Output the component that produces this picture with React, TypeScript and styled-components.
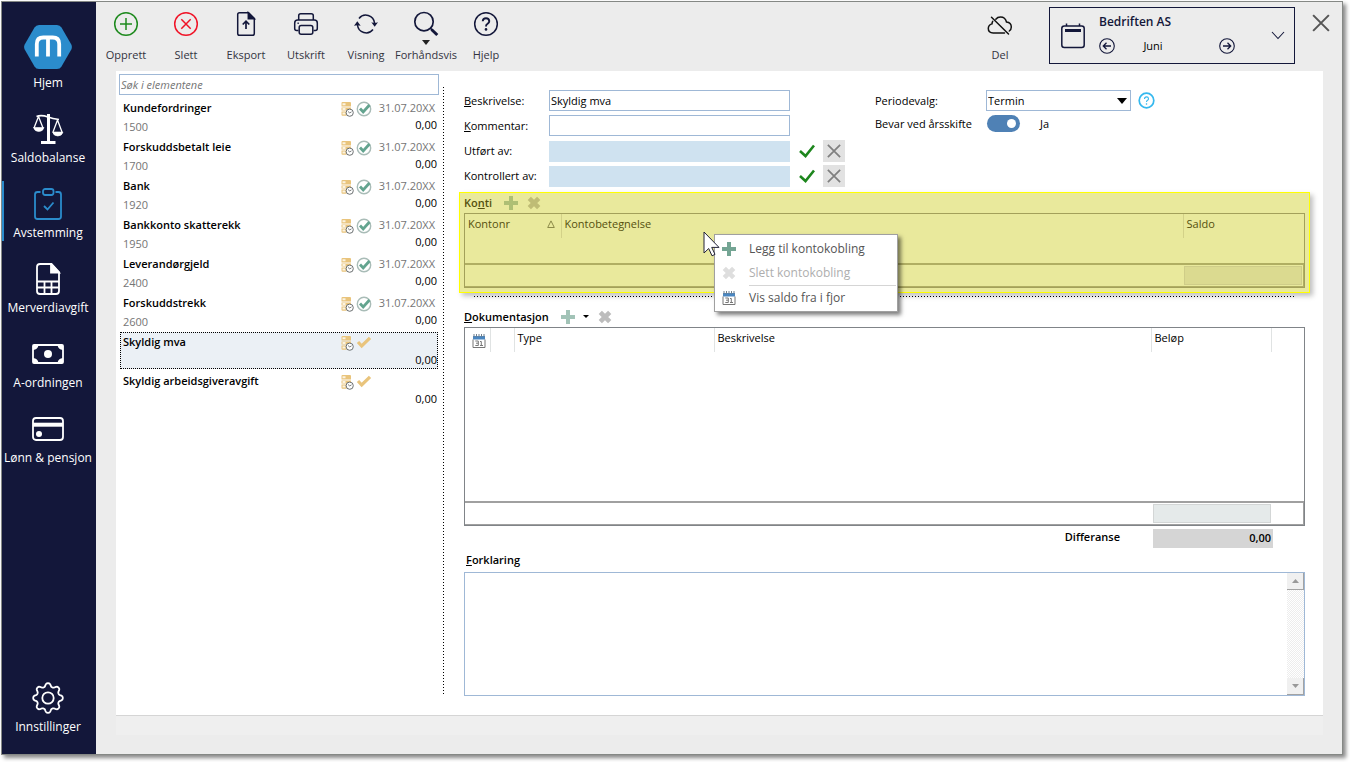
import React from "react";
import styled, { createGlobalStyle } from "styled-components";

const navy = "#13173a";
const blue = "#2b8ccc";
const inputLine = "#9fb8d6";

const GlobalStyle = createGlobalStyle`
  *, *::before, *::after { box-sizing: border-box; }
  body {
    margin: 0;
    background: #fff;
    color: #000;
    font-family: "Open Sans", "Noto Sans", sans-serif;
    font-size: 11px;
    line-height: 16px;
  }
  button, input, select, textarea { font: inherit; color: inherit; margin: 0; }
  button { padding: 0; border: 0; background: none; cursor: pointer; }
  h2 { margin: 0; font-size: 11px; font-weight: 600; line-height: 16px; }
  svg { display: block; flex: none; }
`;

const Page = styled.div`
  display: flex;
  min-height: 100vh;
  padding: 1px 7px 7px 1px;
`;

const Window = styled.div`
  flex: 1;
  display: flex;
  min-width: 0;
  border: 1px solid #858885;
  background: #ececec;
  box-shadow: 3px 3px 4px #8a8a8a;
`;

/* ---------- side navigation ---------- */

const Sidebar = styled.nav`
  flex: none;
  display: flex;
  flex-direction: column;
  gap: 15px;
  width: 94px;
  padding: 23px 0 19px;
  background: ${navy};
`;

const NavItem = styled.a<{ $active?: boolean; $home?: boolean; $last?: boolean }>`
  display: flex;
  flex-direction: column;
  align-items: center;
  justify-content: space-between;
  height: ${(p) => (p.$home ? 66 : 60)}px;
  padding: ${(p) => (p.$home ? 0 : 7)}px 4px 0 0;
  margin-top: ${(p) => (p.$last ? "auto" : "0")};
  border-left: 2px solid ${(p) => (p.$active ? blue : "transparent")};
  color: #fff;
  font-size: 12px;
  text-decoration: none;
  white-space: nowrap;
`;

/* ---------- toolbar ---------- */

const Main = styled.div`
  flex: 1;
  min-width: 0;
  display: flex;
  flex-direction: column;
`;

const Toolbar = styled.header`
  display: flex;
  height: 69px;
  flex: none;
  padding-right: 12px;
`;

const Tool = styled.button`
  display: flex;
  flex-direction: column;
  align-items: center;
  width: 60px;
  padding-top: 8px;
  color: #33333f;
  white-space: nowrap;
`;

const ToolIcon = styled.span`
  display: grid;
  place-items: center;
  height: 28px;
`;

const CaretRow = styled.span`
  display: grid;
  place-items: center;
  height: 9px;
`;

const Spacer = styled.div`
  flex: 1;
`;

const CompanyBox = styled.div`
  display: flex;
  align-items: center;
  width: 246px;
  height: 57px;
  margin: 5px 17px 0 19px;
  padding: 0 9px 0 11px;
  border: 1px solid ${navy};
  color: ${navy};
`;

const CompanyInfo = styled.div`
  width: 136px;
  margin: 0 auto 0 14px;
  padding-bottom: 4px;
`;

const CompanyName = styled.div`
  font-size: 12px;
  font-weight: 600;
`;

const PeriodRow = styled.div`
  display: flex;
  align-items: center;
  justify-content: space-between;
  margin-top: 8px;
  color: #000;
`;

const PeriodName = styled.span`
  width: 76px;
  margin-right: auto;
  text-align: center;
`;

const CloseButton = styled.button`
  align-self: flex-start;
  margin-top: 12px;
`;

/* ---------- content ---------- */

const Panel = styled.main`
  flex: 1;
  display: flex;
  margin: 0 19px 0 20px;
  padding: 3px 18px 19px 3px;
  background: #fff;
  border-bottom: 1px solid #d5d5d5;
`;

const StatusBar = styled.footer`
  flex: none;
  height: 19px;
  margin: 0 19px 19px 20px;
  background: #efefef;
`;

const ListColumn = styled.section`
  flex: none;
  width: 320px;
`;

const Search = styled.input`
  display: block;
  width: 100%;
  height: 21px;
  padding: 0 1px;
  border: 1px solid ${inputLine};
  outline: 0;
  &::placeholder { color: #757575; opacity: 1; font-style: italic; }
`;

const List = styled.ul`
  list-style: none;
  display: flex;
  flex-direction: column;
  gap: 2px;
  margin: 3px 0 0;
  padding: 0 1px;
`;

const ListRow = styled.li<{ $selected?: boolean }>`
  display: grid;
  grid-template-columns: 1fr 13px 17px 62px;
  column-gap: 2px;
  height: 37px;
  padding: 1px 0 0 2px;
  border: 1px dotted ${(p) => (p.$selected ? "#000" : "transparent")};
  background: ${(p) => (p.$selected ? "#ebf0f5" : "none")};
`;

const RowName = styled.strong`
  font-weight: 600;
  white-space: nowrap;
`;

const RowDate = styled.span`
  color: #757575;
  text-align: right;
  padding-right: 2px;
`;

const RowCode = styled.span`
  grid-column: 1;
  color: #757575;
  padding-top: 2px;
`;

const RowAmount = styled.span`
  grid-column: 2 / -1;
  text-align: right;
`;

const Divider = styled.div`
  flex: none;
  width: 1px;
  margin: 13px 20px 0 4px;
  background: repeating-linear-gradient(#000 0 1px, transparent 1px 3px);
`;

const Detail = styled.section`
  flex: 1;
  min-width: 0;
  display: flex;
  flex-direction: column;
  padding-top: 16px;
`;

const Forms = styled.form`
  display: flex;
  gap: 30px;
`;

const FormBlock = styled.div<{ $gap: number }>`
  display: flex;
  flex-direction: column;
  gap: ${(p) => p.$gap}px;
`;

const Field = styled.div<{ $label: number }>`
  display: grid;
  grid-template-columns: ${(p) => p.$label}px auto auto auto;
  align-items: center;
  justify-content: start;
  height: 21px;
`;

const TextBox = styled.input`
  width: 241px;
  height: 21px;
  padding: 0 1px;
  border: 1px solid ${inputLine};
  background: #fff;
  outline: 0;
  &:read-only { border-color: #cfe2f0; background: #cfe2f0; }
`;

const ApproveButton = styled.button`
  margin: 0 8px 0 9px;
`;

const ClearButton = styled.button`
  display: grid;
  place-items: center;
  width: 22px;
  height: 22px;
  background: #e2e2e2;
`;

const SelectWrap = styled.div`
  display: flex;
  align-items: center;
  gap: 7px;
`;

const Select = styled.select`
  width: 145px;
  height: 21px;
  padding: 0 1px;
  border: 1px solid ${inputLine};
  border-radius: 0;
  appearance: none;
  background: #fff;
`;

const SelectArrow = styled.svg`
  margin: 0 4px 0 -21px;
  pointer-events: none;
`;

const Toggle = styled.input`
  appearance: none;
  display: flex;
  align-items: center;
  justify-content: flex-end;
  width: 33px;
  height: 17px;
  margin-left: 1px;
  padding-right: 4px;
  border-radius: 9px;
  background: #4f81b5;
  &::after {
    content: "";
    width: 9px;
    height: 9px;
    border-radius: 50%;
    background: #fff;
  }
`;

const ToggleText = styled.span`
  margin-left: 20px;
`;

const Highlight = styled.section`
  position: relative;
  margin: 6px -5px 0;
  padding: 1px 4px 4px;
  border: 1px solid #ffff00;
  background: #e9e99c;
  color: #55500f;
  box-shadow: 3px 3px 5px rgba(0, 0, 0, 0.25);
`;

const SectionHead = styled.div`
  display: flex;
  align-items: center;
  height: 19px;
  padding-bottom: 2px;
`;

const HeadIcon = styled.button<{ $gap: number }>`
  display: block;
  margin-left: ${(p) => p.$gap}px;
`;

const Frame = styled.div<{ $tinted?: boolean }>`
  flex: 1;
  display: flex;
  flex-direction: column;
  min-height: ${(p) => (p.$tinted ? 75 : 120)}px;
  border: 1px solid ${(p) => (p.$tinted ? "#a3a05a" : "#808488")};
`;

const Table = styled.table`
  width: 100%;
  table-layout: fixed;
  border-collapse: collapse;
`;

const Th = styled.th<{ $w?: number; $line?: string }>`
  width: ${(p) => (p.$w ? p.$w + "px" : "auto")};
  height: 24px;
  padding: 0 3px 4px;
  border-left: ${(p) => (p.$line ? "1px solid " + p.$line : "0")};
  font-weight: 400;
  text-align: left;
`;

const DateTh = styled(Th)`
  padding: 2px 0 0 7px;
`;

const SortHead = styled.span`
  display: flex;
  align-items: center;
  justify-content: space-between;
  padding-right: 3px;
`;

const TotalRow = styled.div<{ $tinted?: boolean }>`
  display: flex;
  justify-content: flex-end;
  height: 24px;
  margin-top: auto;
  padding: 1px ${(p) => (p.$tinted ? 1 : 32)}px 1px 0;
  border: solid ${(p) => (p.$tinted ? "#b0ae62" : "#a0a0a0")};
  border-width: 2px 1px 1px 0;
`;

const TotalCell = styled.output<{ $tinted?: boolean }>`
  width: 118px;
  border: 1px solid ${(p) => (p.$tinted ? "#cfcd88" : "#d3d6d6")};
  background: ${(p) => (p.$tinted ? "#dbda90" : "#e5eaea")};
`;

const Splitter = styled.div`
  height: 1px;
  margin: 3px 10px 11px;
  background: repeating-linear-gradient(90deg, #000 0 1px, transparent 1px 3px);
`;

const Difference = styled.div`
  display: flex;
  justify-content: flex-end;
  gap: 33px;
  margin: 3px 32px 4px 0;
  font-weight: 600;
`;

const DifferenceValue = styled.output`
  width: 120px;
  height: 19px;
  padding: 1px 2px;
  background: #d5d5d5;
  text-align: right;
`;

const NoteHead = styled.h2`
  padding-left: 2px;
`;

const NoteBox = styled.div`
  flex: none;
  display: flex;
  height: 124px;
  margin-top: 4px;
  border: 1px solid ${inputLine};
`;

const Note = styled.textarea`
  flex: 1;
  border: 0;
  outline: 0;
  resize: none;
  overflow: hidden;
`;

const Scrollbar = styled.div`
  display: flex;
  flex-direction: column;
  justify-content: space-between;
  width: 17px;
  background: repeating-conic-gradient(#ededed 0 25%, #fff 0 50%) 0 0 / 2px 2px;
`;

const ScrollButton = styled.button`
  display: grid;
  place-items: center;
  height: 17px;
  border: solid #a3a3a3;
  border-width: 0 1px 1px 0;
  background: #f0f0f0;
`;

/* ---------- context menu ---------- */

const Menu = styled.div`
  position: absolute;
  top: 41px;
  left: 254px;
  z-index: 1;
  width: 184px;
  padding: 2px 1px 1px;
  border: 1px solid #a0a0a0;
  background: #fff;
  box-shadow: 3px 3px 4px rgba(0, 0, 0, 0.5);
`;

const MenuItem = styled.button`
  display: flex;
  align-items: center;
  gap: 13px;
  width: 100%;
  height: 24px;
  padding-left: 6px;
  color: #555;
  font-size: 12px;
  white-space: nowrap;
  &:disabled { color: #aeaeae; }
`;

const MenuLine = styled.div`
  height: 1px;
  margin: 0 0 0 33px;
  background: #d5d5d5;
`;

const Pointer = styled.svg`
  position: absolute;
  top: 38px;
  left: 243px;
  z-index: 2;
`;

/* ---------- icons ---------- */

const HomeLogo = () => (
  <svg width="48" height="44" viewBox="0 0 48 44">
    <path d="M15 0h18q3 0 4.500 2.500L47.300 19.500q1.200 2.500 0 5L37.500 41.500Q36 44 33 44H15q-3 0-4.500-2.500L.7 24.500q-1.200-2.500 0-5L10.500 2.500Q12 0 15 0Z" fill={blue} />
    <path d="M12.800 31.500V19q0-6.500 6.500-6.500h9.400q6.500 0 6.500 6.500v12.500M24 12.500v19" fill="none" stroke="#fff" strokeWidth="3.800" />
  </svg>
);

const ScaleIcon = () => (
  <svg width="32" height="32" viewBox="0 0 32 32" fill="none" stroke="#fff">
    <path d="M16.500 1v27" strokeWidth="3" />
    <path d="M9 29.500h14.500" strokeWidth="3" />
    <path d="M4.500 3.500C9 1.500 12 2.500 16 4s7 2 11 2.500" strokeWidth="1.600" />
    <path d="M6.500 3.500 2 15M6.500 3.500 11 15M25.500 7 21 19M25.500 7 30 19" strokeWidth="1.300" />
    <path d="M1.500 14.500h10.500q-1 4-5.200 4t-5.300-4ZM20.500 19h10.500q-1 4-5.200 4t-5.300-4Z" fill="#fff" strokeWidth="0.600" />
  </svg>
);

const ClipboardIcon = () => (
  <svg width="32" height="32" viewBox="0 0 32 32" fill="none" stroke={blue} strokeWidth="1.800">
    <path d="M8.500 4H5.500Q3 4 3 6.500v22Q3 31 5.500 31h21q2.500 0 2.500-2.500v-22Q29 4 26.500 4h-3" />
    <rect x="11" y="1" width="10.500" height="6" rx="2.200" />
    <path d="m12 18 3.500 3.500 6-7" />
  </svg>
);

const SheetIcon = () => (
  <svg width="32" height="32" viewBox="0 0 32 32" fill="none" stroke="#fff" strokeWidth="1.800">
    <path d="M19.500 1H8Q5 1 5 4v24q0 3 3 3h16q3 0 3-3V9Z" />
    <path d="M19 1v8.500h8Z" fill="#fff" />
    <path d="M5 18.500h22M5 24.500h22M12.500 18.500V31M19.500 18.500V31" />
  </svg>
);

const MoneyIcon = () => (
  <svg width="32" height="32" viewBox="0 0 32 32" fill="none" stroke="#fff" strokeWidth="1.800">
    <rect x="1" y="7" width="30" height="18" rx="1" />
    <circle cx="16" cy="16" r="4" fill="#fff" stroke="none" />
    <path d="M1 7h5.500Q6 11.500 1 12ZM31 7h-5.500q.5 4.500 5.500 5ZM1 25h5.500Q6 20.500 1 20ZM31 25h-5.500q.5-4.500 5.500-5Z" fill="#fff" stroke="none" />
  </svg>
);

const CardIcon = () => (
  <svg width="32" height="32" viewBox="0 0 32 32" fill="none" stroke="#fff" strokeWidth="1.800">
    <rect x="1" y="5" width="30" height="22" rx="3" />
    <path d="M1 11.700h30" strokeWidth="4" />
    <circle cx="7" cy="21" r="3" fill="#fff" stroke="none" />
  </svg>
);

const gearPath =
  Array.from({ length: 160 }, (_, i) => {
    const a = (i / 160) * Math.PI * 2;
    const r = 13.1 + 1.900 * Math.tanh(1.400 * Math.cos(8 * a));
    return `${i ? "L" : "M"}${(16 + r * Math.sin(a)).toFixed(2)} ${(16 - r * Math.cos(a)).toFixed(2)}`;
  }).join("") + "Z";

const GearIcon = () => (
  <svg width="32" height="32" viewBox="0 0 32 32" fill="none" stroke="#fff" strokeWidth="1.800" strokeLinejoin="round">
    <path d={gearPath} />
    <circle cx="16" cy="16" r="5.700" />
  </svg>
);

const CreateIcon = () => (
  <svg width="26" height="26" viewBox="0 0 26 26" fill="none" stroke="#1e8a1e" strokeWidth="1.500">
    <circle cx="13" cy="13" r="11.300" />
    <path d="M13 7v12M7 13h12" />
  </svg>
);

const DeleteIcon = () => (
  <svg width="26" height="26" viewBox="0 0 26 26" fill="none" stroke="#f01428" strokeWidth="1.500">
    <circle cx="13" cy="13" r="11.300" />
    <path d="m8.300 8.300 9.400 9.400M17.700 8.300l-9.400 9.400" />
  </svg>
);

const ExportIcon = () => (
  <svg width="26" height="26" viewBox="0 0 26 26" fill="none" stroke={navy} strokeWidth="1.500">
    <path d="M15.500 1.700H6.500Q4.700 1.700 4.700 3.500v19q0 1.800 1.800 1.800h13q1.800 0 1.800-1.800V7.500Z" />
    <path d="M15.300 1.700v6h6Z" fill={navy} />
    <path d="M13 18v-7.500M9.700 13.500l3.300-3.300 3.300 3.300" strokeWidth="1.700" />
  </svg>
);

const PrintIcon = () => (
  <svg width="26" height="26" viewBox="0 0 26 26" fill="none" stroke={navy} strokeWidth="1.500">
    <path d="M5.700 9V4.700q0-2 2-2h10.600q2 0 2 2V9" />
    <path d="M5.500 19.500H3.700q-2 0-2-2V12q0-3 3-3h16.600q3 0 3 3v5.500q0 2-2 2h-1.800" />
    <rect x="6.200" y="14.500" width="13.600" height="8.800" rx="2" />
    <path d="M4.500 12.200h1.300" />
  </svg>
);

const RefreshIcon = () => (
  <svg width="26" height="26" viewBox="0 0 26 26" fill="none" stroke={navy} strokeWidth="1.500">
    <path d="M6 7.500A8.700 8.700 0 0 1 21.500 12" />
    <path d="M20 18.500A8.700 8.700 0 0 1 4.500 14" />
    <path d="M18.300 11.200q3.300 1 6.700 0l-3.300 4.600ZM1 14.800q3.300-1 6.700 0L4.300 10.200Z" fill={navy} stroke="none" />
  </svg>
);

const SearchIcon = () => (
  <svg width="26" height="26" viewBox="0 0 26 26" fill="none" stroke={navy}>
    <circle cx="11" cy="10.700" r="9.200" strokeWidth="1.700" />
    <path d="m17.300 17.200 1.900 1.800" strokeWidth="1.700" />
    <path d="m18.500 18.500 5.800 5.500" strokeWidth="3" />
  </svg>
);

const HelpIcon = () => (
  <svg width="26" height="26" viewBox="0 0 26 26" fill="none" stroke={navy} strokeWidth="1.500">
    <circle cx="13" cy="13" r="11.300" />
    <path d="M9.700 10.300q.2-3.100 3.300-3.100t3.300 2.900q0 1.600-1.700 2.700T13 15.500" strokeWidth="1.900" />
    <circle cx="13" cy="18.400" r="1.300" fill={navy} stroke="none" />
  </svg>
);

const CloudOffIcon = () => (
  <svg width="26" height="28" viewBox="0 -2 26 28" fill="none" stroke="#111" strokeWidth="1.500" strokeLinecap="round">
    <path d="M8.800 7.200Q10.500 5 13.500 5q4.800 0 6 5 4.800.5 4.800 5 0 2.600-2 4M17.500 21H6.200q-4.900-.3-4.900-4.500 0-3.500 3.700-4.600.1-1.400.7-2.500" />
    <path d="M4.500 5.200 21.500 22" />
  </svg>
);

const CalendarIcon = () => (
  <svg width="24" height="26" viewBox="0 0 24 26" fill="none" stroke={navy} strokeWidth="1.500">
    <rect x=".8" y="3" width="22.400" height="21.600" rx="2.500" />
    <path d="M4 7.500h16" strokeWidth="3" />
    <path d="M5.500 .5V3M18.500 .5V3" />
  </svg>
);

const CircleArrow = ({ right }: { right?: boolean }) => (
  <svg width="16" height="16" viewBox="0 0 16 16" fill="none" stroke={navy} strokeWidth="1.100">
    <circle cx="8" cy="8" r="7.300" />
    <path d={right ? "M4 8h7.500M8.500 4.800 11.700 8l-3.200 3.200" : "M12 8H4.500M7.500 4.800 4.300 8l3.200 3.200"} strokeWidth="1.300" />
  </svg>
);

const Caret = ({ width = 8, height = 5, color = "#222" }: { width?: number; height?: number; color?: string }) => (
  <svg width={width} height={height} viewBox="0 0 8 5" preserveAspectRatio="none">
    <path d="M0 0h8L4 5Z" fill={color} />
  </svg>
);

const StackIcon = () => (
  <svg width="13" height="17" viewBox="0 -1 13 17">
    <path d="M1.500 1h7.500q1 0 1 1v3.500H.5V2q0-1 1-1ZM.5 6.500H10v3H.5ZM.5 10.500h5v4.200h-4q-1 0-1-1Z" fill="#e9c47c" />
    <path d="M1.500 2.200h3v2h-3ZM1.500 7h3v2h-3ZM1.500 11.500h3v2h-3Z" fill="#fbf3e1" />
    <circle cx="8.700" cy="11.700" r="3.600" fill="#fff" stroke="#6c7072" strokeWidth="1" />
    <path d="m7 10.500 1.700 1.400 1.800-1" fill="none" stroke="#6c7072" strokeWidth=".9" />
  </svg>
);

const DoneIcon = () => (
  <svg width="16" height="17" viewBox="0 -1 16 17" fill="none">
    <circle cx="8" cy="8" r="6.700" stroke="#a9bcb7" strokeWidth="1.400" />
    <path d="m4 7.500 3.200 3.500L13.500 4" stroke="#63a48f" strokeWidth="2.800" />
  </svg>
);

const PendingIcon = () => (
  <svg width="16" height="16" viewBox="0 0 16 16" fill="none">
    <path d="m2 8 3.700 4L14 3.800" stroke="#e9c47c" strokeWidth="3.200" />
  </svg>
);

const ApproveIcon = () => (
  <svg width="16" height="14" viewBox="0 0 16 14" fill="none">
    <path d="m1 7 5.500 5L15 1.500" stroke="#1d861d" strokeWidth="2.600" />
  </svg>
);

const CrossIcon = ({ size, color, weight }: { size: number; color: string; weight: number }) => (
  <svg width={size} height={size} viewBox="0 0 16 16" fill="none" stroke={color} strokeWidth={weight}>
    <path d="m1 1 14 14M15 1 1 15" />
  </svg>
);

const PlusIcon = ({ color }: { color: string }) => (
  <svg width="14" height="14" viewBox="0 0 14 14">
    <path d="M5 0h4v5h5v4H9v5H5V9H0V5h5Z" fill={color} />
  </svg>
);

const RemoveIcon = ({ color }: { color: string }) => (
  <svg width="14" height="14" viewBox="0 0 14 14">
    <path d="m2.300 2.300 9.400 9.400M11.700 2.300l-9.400 9.400" stroke={color} strokeWidth="4.600" />
  </svg>
);

const DateIcon = () => (
  <svg width="14" height="14" viewBox="0 0 14 14" fill="none">
    <path d="M1 2h12v3.500H1Z" fill="#4a86c0" />
    <path d="M2 0v3M4.500 0v3M7 0v3M9.500 0v3M12 0v3" stroke="#6f7f8d" strokeWidth="1" />
    <path d="M1 5.500V13.500h12V5.500" stroke="#777" />
    <path d="M3.300 7h3v4.500h-3M4 9.200h2.300M8 7.500h1.300v4M8 11.500h3" stroke="#777" />
  </svg>
);

/* ---------- data ---------- */

type Item = { name: string; code?: string; date?: string; selected?: boolean };

const items: Item[] = [
  { name: "Kundefordringer", code: "1500", date: "31.07.20XX" },
  { name: "Forskuddsbetalt leie", code: "1700", date: "31.07.20XX" },
  { name: "Bank", code: "1920", date: "31.07.20XX" },
  { name: "Bankkonto skatterekk", code: "1950", date: "31.07.20XX" },
  { name: "Leverandørgjeld", code: "2400", date: "31.07.20XX" },
  { name: "Forskuddstrekk", code: "2600", date: "31.07.20XX" },
  { name: "Skyldig mva", selected: true },
  { name: "Skyldig arbeidsgiveravgift" },
];

const tools = [
  { label: "Opprett", icon: <CreateIcon /> },
  { label: "Slett", icon: <DeleteIcon /> },
  { label: "Eksport", icon: <ExportIcon /> },
  { label: "Utskrift", icon: <PrintIcon /> },
  { label: "Visning", icon: <RefreshIcon /> },
  { label: "Forhåndsvis", icon: <SearchIcon />, caret: true },
  { label: "Hjelp", icon: <HelpIcon /> },
];

const navItems = [
  { label: "Hjem", icon: <HomeLogo />, home: true },
  { label: "Saldobalanse", icon: <ScaleIcon /> },
  { label: "Avstemming", icon: <ClipboardIcon />, active: true },
  { label: "Merverdiavgift", icon: <SheetIcon /> },
  { label: "A-ordningen", icon: <MoneyIcon /> },
  { label: "Lønn & pensjon", icon: <CardIcon /> },
];

const SignField = ({ id, label }: { id: string; label: string }) => (
  <Field $label={85}>
    <label htmlFor={id}>{label}</label>
    <TextBox id={id} readOnly />
    <ApproveButton type="button" aria-label="Godkjenn">
      <ApproveIcon />
    </ApproveButton>
    <ClearButton type="button" aria-label="Fjern">
      <CrossIcon size={14} color="#808080" weight={2} />
    </ClearButton>
  </Field>
);

export default function App() {
  return (
    <Page>
      <GlobalStyle />
      <Window>
        <Sidebar>
          {navItems.map((n) => (
            <NavItem key={n.label} href="#" $home={n.home} $active={n.active}>
              {n.icon}
              {n.label}
            </NavItem>
          ))}
          <NavItem href="#" $last>
            <GearIcon />
            Innstillinger
          </NavItem>
        </Sidebar>

        <Main>
          <Toolbar>
            {tools.map((t) => (
              <Tool key={t.label} type="button">
                <ToolIcon>{t.icon}</ToolIcon>
                <CaretRow>{t.caret && <Caret />}</CaretRow>
                {t.label}
              </Tool>
            ))}
            <Spacer />
            <Tool type="button">
              <ToolIcon>
                <CloudOffIcon />
              </ToolIcon>
              <CaretRow />
              Del
            </Tool>
            <CompanyBox>
              <CalendarIcon />
              <CompanyInfo>
                <CompanyName>Bedriften AS</CompanyName>
                <PeriodRow>
                  <button type="button" aria-label="Forrige">
                    <CircleArrow />
                  </button>
                  <PeriodName>Juni</PeriodName>
                  <button type="button" aria-label="Neste">
                    <CircleArrow right />
                  </button>
                </PeriodRow>
              </CompanyInfo>
              <button type="button" aria-label="Velg">
                <svg width="14" height="9" viewBox="0 0 14 9" fill="none" stroke={navy} strokeWidth="1.100">
                  <path d="m1 1 6 6.500L13 1" />
                </svg>
              </button>
            </CompanyBox>
            <CloseButton type="button" aria-label="Lukk">
              <CrossIcon size={18} color="#555" weight={1.800} />
            </CloseButton>
          </Toolbar>

          <Panel>
            <ListColumn>
              <Search placeholder="Søk i elementene" aria-label="Søk i elementene" />
              <List>
                {items.map((it) => (
                  <ListRow key={it.name} $selected={it.selected}>
                    <RowName>{it.name}</RowName>
                    <StackIcon />
                    {it.date ? <DoneIcon /> : <PendingIcon />}
                    <RowDate>{it.date}</RowDate>
                    <RowCode>{it.code}</RowCode>
                    <RowAmount>0,00</RowAmount>
                  </ListRow>
                ))}
              </List>
            </ListColumn>

            <Divider />

            <Detail>
              <Forms>
                <FormBlock $gap={4}>
                  <Field $label={85}>
                    <label htmlFor="desc">
                      <u>B</u>eskrivelse:
                    </label>
                    <TextBox id="desc" defaultValue="Skyldig mva" />
                  </Field>
                  <Field $label={85}>
                    <label htmlFor="comment">
                      <u>K</u>ommentar:
                    </label>
                    <TextBox id="comment" />
                  </Field>
                  <SignField id="done" label="Utført av:" />
                  <SignField id="checked" label="Kontrollert av:" />
                </FormBlock>
                <FormBlock $gap={2}>
                  <Field $label={111}>
                    <label htmlFor="period">Periodevalg:</label>
                    <SelectWrap>
                      <Select id="period" defaultValue="Termin">
                        <option>Termin</option>
                      </Select>
                      <SelectArrow width="10" height="6" viewBox="0 0 10 6">
                        <path d="M0 0h10L5 6Z" />
                      </SelectArrow>
                      <button type="button" aria-label="Hjelp">
                        <svg width="17" height="17" viewBox="0 0 17 17" fill="none" stroke="#35b8ee">
                          <circle cx="8.500" cy="8.500" r="7.300" strokeWidth="1.700" />
                          <path d="M6.500 7q.1-2.100 2-2.100t2 1.800q0 1-1 1.600t-1 1.700" strokeWidth="1.100" />
                          <path d="M8.500 11.300v1.400" strokeWidth="1.300" />
                        </svg>
                      </button>
                    </SelectWrap>
                  </Field>
                  <Field $label={111}>
                    <label htmlFor="keep">Bevar ved årsskifte</label>
                    <Toggle id="keep" type="checkbox" defaultChecked />
                    <ToggleText>Ja</ToggleText>
                  </Field>
                </FormBlock>
              </Forms>

              <Highlight>
                <SectionHead>
                  <h2>
                    Ko<u>n</u>ti
                  </h2>
                  <HeadIcon $gap={12} type="button" aria-label="Legg til konto">
                    <PlusIcon color="#aebf74" />
                  </HeadIcon>
                  <HeadIcon $gap={9} type="button" aria-label="Slett konto">
                    <RemoveIcon color="#bfbc75" />
                  </HeadIcon>
                </SectionHead>
                <Frame $tinted>
                  <Table>
                    <thead>
                      <tr>
                        <Th $w={96}>
                          <SortHead>
                            Kontonr
                            <svg width="8" height="8" viewBox="0 0 8 8" fill="none" stroke="#8c8a48">
                              <path d="M.7 7.500 4 .9l3.300 6.600Z" />
                            </svg>
                          </SortHead>
                        </Th>
                        <Th $line="#d3d188">Kontobetegnelse</Th>
                        <Th $w={121} $line="#d3d188">
                          Saldo
                        </Th>
                      </tr>
                    </thead>
                  </Table>
                  <TotalRow $tinted>
                    <TotalCell $tinted />
                  </TotalRow>
                </Frame>
                <Menu role="menu">
                  <MenuItem type="button" role="menuitem">
                    <PlusIcon color="#74a594" />
                    Legg til kontokobling
                  </MenuItem>
                  <MenuItem type="button" role="menuitem" disabled>
                    <RemoveIcon color="#dedede" />
                    Slett kontokobling
                  </MenuItem>
                  <MenuLine />
                  <MenuItem type="button" role="menuitem">
                    <DateIcon />
                    Vis saldo fra i fjor
                  </MenuItem>
                </Menu>
                <Pointer width="18" height="26" viewBox="0 0 18 26">
                  <path d="M1 1v21l4.700-4.500 3.300 7.300 3-1.400-3.300-7H16Z" fill="#fff" stroke="#222238" />
                </Pointer>
              </Highlight>

              <Splitter />

              <SectionHead>
                <h2>
                  <u>D</u>okumentasjon
                </h2>
                <HeadIcon $gap={12} type="button" aria-label="Legg til dokumentasjon">
                  <PlusIcon color="#a2c3b7" />
                </HeadIcon>
                <HeadIcon $gap={8} type="button" aria-label="Flere valg">
                  <Caret width={6} height={3} color="#000" />
                </HeadIcon>
                <HeadIcon $gap={9} type="button" aria-label="Slett dokumentasjon">
                  <RemoveIcon color="#bdbdbd" />
                </HeadIcon>
              </SectionHead>
              <Frame>
                <Table>
                  <thead>
                    <tr>
                      <DateTh $w={25} aria-label="Dato">
                        <DateIcon />
                      </DateTh>
                      <Th $w={24} $line="#e0e3e3" />
                      <Th $w={200} $line="#e0e3e3">
                        Type
                      </Th>
                      <Th $line="#e0e3e3">Beskrivelse</Th>
                      <Th $w={120} $line="#e0e3e3">
                        Beløp
                      </Th>
                      <Th $w={33} $line="#e0e3e3" />
                    </tr>
                  </thead>
                </Table>
                <TotalRow>
                  <TotalCell />
                </TotalRow>
              </Frame>

              <Difference>
                <label htmlFor="diff">Differanse</label>
                <DifferenceValue id="diff">0,00</DifferenceValue>
              </Difference>

              <NoteHead>
                <label htmlFor="note">
                  <u>F</u>orklaring
                </label>
              </NoteHead>
              <NoteBox>
                <Note id="note" />
                <Scrollbar>
                  <ScrollButton type="button" aria-label="Rull opp">
                    <svg width="7" height="4" viewBox="0 0 7 4">
                      <path d="M0 4h7L3.500 0Z" fill="#999" />
                    </svg>
                  </ScrollButton>
                  <ScrollButton type="button" aria-label="Rull ned">
                    <svg width="7" height="4" viewBox="0 0 7 4">
                      <path d="M0 0h7L3.500 4Z" fill="#999" />
                    </svg>
                  </ScrollButton>
                </Scrollbar>
              </NoteBox>
            </Detail>
          </Panel>
          <StatusBar />
        </Main>
      </Window>
    </Page>
  );
}
